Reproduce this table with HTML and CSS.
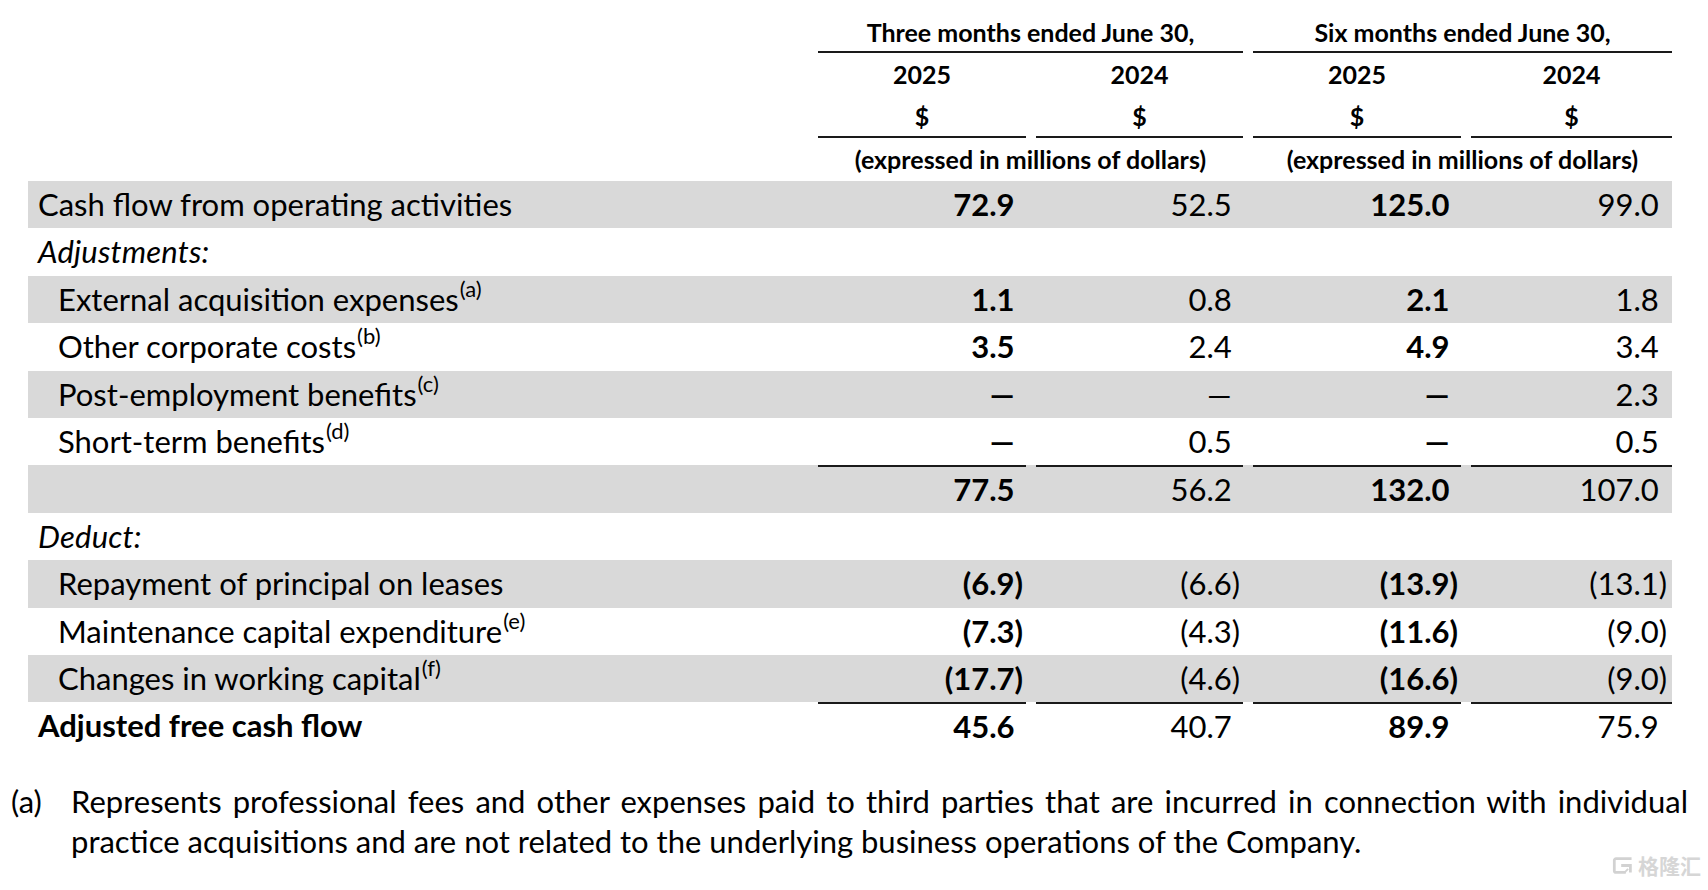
FILE: index.html
```html
<!DOCTYPE html>
<html lang="en">
<head>
<meta charset="utf-8">
<title>Adjusted free cash flow</title>
<link rel="stylesheet" href="styles.css">
</head>
<body>
<div class="page">
  <div class="table">
    <div class="row head-title">
      <div class="lbl"></div>
      <div class="cell span2 ruled">Three months ended June 30,</div>
      <div class="cell span2 ruled">Six months ended June 30,</div>
    </div>
    <div class="row head-year">
      <div class="lbl"></div>
      <div class="cell">2025</div>
      <div class="cell">2024</div>
      <div class="cell">2025</div>
      <div class="cell">2024</div>
    </div>
    <div class="row head-cur">
      <div class="lbl"></div>
      <div class="cell ruled">$</div>
      <div class="cell ruled">$</div>
      <div class="cell ruled">$</div>
      <div class="cell ruled">$</div>
    </div>
    <div class="row head-unit">
      <div class="lbl"></div>
      <div class="cell span2">(expressed in millions of dollars)</div>
      <div class="cell span2">(expressed in millions of dollars)</div>
    </div>

    <div class="row body band">
      <div class="lbl">Cash flow from operating activities</div>
      <div class="num b"><span class="pos">72.9</span></div>
      <div class="num"><span class="pos">52.5</span></div>
      <div class="num b"><span class="pos">125.0</span></div>
      <div class="num last"><span class="pos">99.0</span></div>
    </div>
    <div class="row body">
      <div class="lbl ital">Adjustments:</div>
      <div class="num"></div><div class="num"></div><div class="num"></div><div class="num last"></div>
    </div>
    <div class="row body band">
      <div class="lbl ind">External acquisition expenses<sup>(a)</sup></div>
      <div class="num b"><span class="pos">1.1</span></div>
      <div class="num"><span class="pos">0.8</span></div>
      <div class="num b"><span class="pos">2.1</span></div>
      <div class="num last"><span class="pos">1.8</span></div>
    </div>
    <div class="row body">
      <div class="lbl ind">Other corporate costs<sup>(b)</sup></div>
      <div class="num b"><span class="pos">3.5</span></div>
      <div class="num"><span class="pos">2.4</span></div>
      <div class="num b"><span class="pos">4.9</span></div>
      <div class="num last"><span class="pos">3.4</span></div>
    </div>
    <div class="row body band">
      <div class="lbl ind">Post-employment benefits<sup>(c)</sup></div>
      <div class="num b"><span class="pos dash">—</span></div>
      <div class="num"><span class="pos dash">—</span></div>
      <div class="num b"><span class="pos dash">—</span></div>
      <div class="num last"><span class="pos">2.3</span></div>
    </div>
    <div class="row body">
      <div class="lbl ind">Short-term benefits<sup>(d)</sup></div>
      <div class="num b"><span class="pos dash">—</span></div>
      <div class="num"><span class="pos">0.5</span></div>
      <div class="num b"><span class="pos dash">—</span></div>
      <div class="num last"><span class="pos">0.5</span></div>
    </div>
    <div class="row body band">
      <div class="lbl"></div>
      <div class="num b topline"><span class="pos">77.5</span></div>
      <div class="num topline"><span class="pos">56.2</span></div>
      <div class="num b topline"><span class="pos">132.0</span></div>
      <div class="num last topline"><span class="pos">107.0</span></div>
    </div>
    <div class="row body">
      <div class="lbl ital">Deduct:</div>
      <div class="num"></div><div class="num"></div><div class="num"></div><div class="num last"></div>
    </div>
    <div class="row body band">
      <div class="lbl ind">Repayment of principal on leases</div>
      <div class="num b"><span>(6.9)</span></div>
      <div class="num"><span>(6.6)</span></div>
      <div class="num b"><span>(13.9)</span></div>
      <div class="num last"><span>(13.1)</span></div>
    </div>
    <div class="row body">
      <div class="lbl ind">Maintenance capital expenditure<sup>(e)</sup></div>
      <div class="num b"><span>(7.3)</span></div>
      <div class="num"><span>(4.3)</span></div>
      <div class="num b"><span>(11.6)</span></div>
      <div class="num last"><span>(9.0)</span></div>
    </div>
    <div class="row body band">
      <div class="lbl ind">Changes in working capital<sup>(f)</sup></div>
      <div class="num b"><span>(17.7)</span></div>
      <div class="num"><span>(4.6)</span></div>
      <div class="num b"><span>(16.6)</span></div>
      <div class="num last"><span>(9.0)</span></div>
    </div>
    <div class="row body">
      <div class="lbl strong">Adjusted free cash flow</div>
      <div class="num b topline"><span class="pos">45.6</span></div>
      <div class="num topline"><span class="pos">40.7</span></div>
      <div class="num b topline"><span class="pos">89.9</span></div>
      <div class="num last topline"><span class="pos">75.9</span></div>
    </div>
  </div>

  <div class="note">
    <div class="note-mark">(a)</div>
    <div class="note-text">
      <span class="note-line full">Represents professional fees and other expenses paid to third parties that are incurred in connection with individual</span>
      <span class="note-line">practice acquisitions and are not related to the underlying business operations of the Company.</span>
    </div>
  </div>

  <div class="watermark">
    <svg class="wm-icon" viewBox="0 0 20 16" width="23" height="19" aria-hidden="true">
      <path d="M17 2H3.5C2.7 2 2 2.7 2 3.5v9C2 13.3 2.7 14 3.5 14H12" fill="none" stroke="#d2d2d2" stroke-width="2.4"/>
      <path d="M8 8h8v6" fill="none" stroke="#d2d2d2" stroke-width="2.4"/>
      <path d="M11 14l3-3" fill="none" stroke="#d2d2d2" stroke-width="1.6"/>
    </svg>
    <span class="wm-text">格隆汇</span>
  </div>
</div>
</body>
</html>
```

FILE: styles.css
```css
html, body {
  margin: 0;
  padding: 0;
  background: #ffffff;
}

.page {
  position: relative;
  width: 1708px;
  height: 890px;
  font-family: Lato, "Noto Sans", sans-serif;
  color: #000;
}

.table {
  padding-left: 28px;
  width: 1644px;
}

.row {
  display: grid;
  grid-template-columns: 780px 208px 207px 208px 201px;
  column-gap: 10px;
}

.span2 {
  grid-column: span 2;
}

.cell {
  text-align: center;
  font-weight: 700;
  font-size: 25px;
  box-sizing: border-box;
}

.ruled {
  border-bottom: 2px solid #1a1a1a;
}

.head-title {
  height: 53px;
}
.head-title .cell {
  height: 53px;
  padding-top: 13px;
  line-height: 38px;
}

.head-year {
  height: 42px;
}
.head-year .cell {
  line-height: 42px;
}

.head-cur {
  height: 43px;
}
.head-cur .cell {
  height: 43px;
  padding-top: 1px;
  line-height: 40px;
}

.head-unit {
  height: 43px;
}
.head-unit .cell {
  line-height: 43px;
}

.body {
  height: 47.4px;
  font-size: 31px;
  line-height: 47.4px;
}

.band {
  background: #d9d9d9;
}

.lbl {
  padding-left: 10px;
  white-space: nowrap;
}

.lbl.ind {
  padding-left: 30px;
}

.lbl.ital {
  font-style: italic;
  letter-spacing: 0.2px;
}

.lbl.strong {
  font-weight: 700;
}

.lbl sup {
  font-size: 22px;
  line-height: 0;
  vertical-align: 14px;
  margin-left: 1px;
}

.num {
  text-align: right;
  padding-right: 3px;
  box-sizing: border-box;
  white-space: nowrap;
}

.num.last {
  padding-right: 5px;
}

.num.b {
  font-weight: 700;
}

.pos::after {
  content: ")";
  visibility: hidden;
}

.topline {
  border-top: 2px solid #1a1a1a;
  line-height: 45.4px;
}

.note {
  display: flex;
  margin-top: 31px;
  font-size: 31px;
  line-height: 40px;
}

.note-mark {
  width: 60px;
  padding-left: 11px;
  flex: none;
}

.note-text {
  width: 1617px;
}

.note-line {
  display: block;
  white-space: nowrap;
}

.note-line.full {
  text-align: justify;
  text-align-last: justify;
  white-space: normal;
}

.watermark {
  position: absolute;
  left: 1612px;
  top: 854px;
  display: flex;
  align-items: center;
  gap: 3px;
}

.wm-icon {
  display: block;
}

.wm-text {
  font-family: "Noto Sans CJK SC", sans-serif;
  font-size: 21px;
  line-height: 22px;
  font-weight: 700;
  color: #d6d6d6;
}
```
